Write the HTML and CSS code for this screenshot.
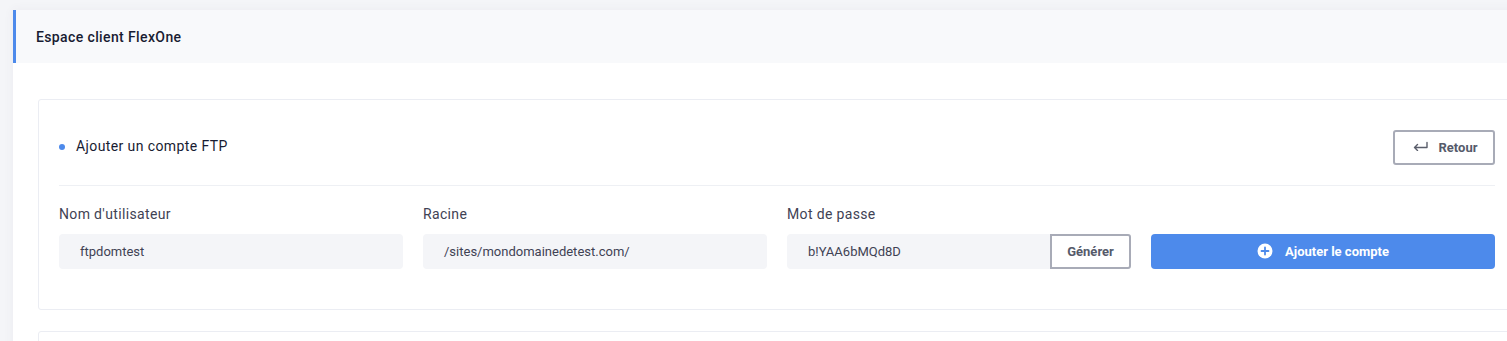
FILE: index.html
```html
<!DOCTYPE html>
<html lang="fr">
<head>
<meta charset="utf-8">
<title>Espace client FlexOne</title>
<link rel="stylesheet" href="styles.css">
</head>
<body>
<div class="page">
  <div class="main">
    <div class="main-header">Espace client FlexOne</div>
    <div class="main-body">
      <div class="card">
        <div class="card-head">
          <div class="card-title"><span class="dot"></span>Ajouter un compte FTP</div>
          <button class="btn-outline btn-back">
            <svg width="15" height="10" viewBox="0 0 15 10" fill="none" stroke="#5a5e6b" stroke-width="1.4" stroke-linecap="round" stroke-linejoin="round"><path d="M14 1.5V6.5H1.5M4.5 3.5L1.5 6.5L4.5 9.5"/></svg>
            <span>Retour</span>
          </button>
        </div>
        <div class="form">
          <div class="field">
            <label class="label">Nom d'utilisateur</label>
            <div class="input">ftpdomtest</div>
          </div>
          <div class="field">
            <label class="label">Racine</label>
            <div class="input">/sites/mondomainedetest.com/</div>
          </div>
          <div class="field">
            <label class="label">Mot de passe</label>
            <div class="input-group">
              <div class="input input-grow">b!YAA6bMQd8D</div>
              <button class="btn-outline btn-gen">Générer</button>
            </div>
          </div>
          <div class="field field-end">
            <button class="btn-primary">
              <svg width="16" height="16" viewBox="0 0 16 16"><circle cx="8" cy="8" r="7.5" fill="#fff"/><path d="M8 4.5V11.5M4.5 8H11.5" stroke="#4d8aeb" stroke-width="1.8" stroke-linecap="round"/></svg>
              <span>Ajouter le compte</span>
            </button>
          </div>
        </div>
      </div>
      <div class="card card-next"></div>
    </div>
  </div>
</div>
</body>
</html>
```
FILE: styles.css
```css
html, body {
  margin: 0;
  padding: 0;
  overflow: hidden;
}
body {
  background: #f4f5f8;
  font-family: Roboto, "Liberation Sans", Arial, sans-serif;
  color: #3f4254;
  width: 1507px;
  height: 341px;
}
.page {
  padding: 10px 0 0 13px;
  width: 1560px;
}
.main {
  background: #fff;
  box-shadow: 0 0 10px rgba(82, 63, 105, 0.06);
  height: 400px;
}
.main-header {
  height: 53px;
  background: #f8f9fb;
  border-left: 3px solid #4d8aeb;
  padding-left: 20px;
  display: flex;
  align-items: center;
  font-size: 14px;
  font-weight: 500;
  letter-spacing: 0.38px;
  color: #181c32;
}
.main-body {
  padding: 36px 0 0 25px;
}
.card {
  width: 1436px;
  padding: 0 21px 0 20px;
  border: 1px solid #ebedf3;
  border-radius: 3px;
}
.card-next {
  margin-top: 21px;
  height: 40px;
}
.card-head {
  display: flex;
  align-items: center;
  justify-content: space-between;
  padding: 30px 0 20px;
  border-bottom: 1px solid #eef0f4;
}
.card-title {
  display: flex;
  align-items: center;
  font-size: 14px;
  letter-spacing: 0.4px;
  color: #181c32;
  margin-top: -3px;
}
.dot {
  width: 6px;
  height: 6px;
  border-radius: 50%;
  background: #4d8aeb;
  margin-right: 11px;
  margin-top: 1px;
}
button {
  font-family: inherit;
  cursor: pointer;
}
.btn-outline {
  background: #fff;
  border: 2px solid #a8abb7;
  color: #555a6a;
  font-size: 13px;
  font-weight: 700;
}
.btn-back {
  width: 102px;
  height: 35px;
  border-radius: 3px;
  display: flex;
  align-items: center;
  justify-content: center;
  gap: 11px;
  padding: 0 0 0 2px;
}
.btn-back svg {
  margin-top: -3px;
}
.form {
  display: grid;
  grid-template-columns: repeat(4, 344px);
  column-gap: 20px;
  padding: 18px 0 40px;
}
.field {
  display: flex;
  flex-direction: column;
}
.field-end {
  justify-content: flex-end;
}
.label {
  font-size: 14px;
  line-height: 20px;
  letter-spacing: 0.35px;
  margin-bottom: 10px;
  color: #3f4254;
}
.input {
  height: 35px;
  box-sizing: border-box;
  background: #f4f5f8;
  border-radius: 4px;
  padding-left: 21px;
  display: flex;
  align-items: center;
  font-size: 13px;
  color: #3f4254;
}
.input-group {
  display: flex;
}
.input-grow {
  flex: 1;
  border-radius: 4px 0 0 4px;
}
.btn-gen {
  width: 81px;
  height: 35px;
  border-radius: 0 3px 3px 0;
  padding: 0;
}
.btn-primary {
  height: 35px;
  border: none;
  border-radius: 4px;
  background: #4d8aeb;
  color: #fff;
  font-size: 13px;
  font-weight: 700;
  display: flex;
  align-items: center;
  justify-content: center;
  gap: 12px;
  padding: 0;
}
.btn-primary svg {
  margin-top: -2px;
}
```
